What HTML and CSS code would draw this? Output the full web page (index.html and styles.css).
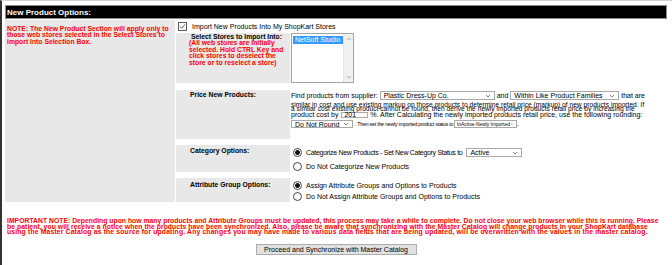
FILE: index.html
```html
<!DOCTYPE html>
<html>
<head>
<meta charset="utf-8">
<link rel="stylesheet" href="styles.css">
</head>
<body>
<div class="page">
  <div class="bar">New Product Options:</div>
  <div class="main">
    <div class="note">NOTE: The New Product Section will apply only to those web stores selected in the Select Stores to import Into Selection Box.</div>
    <div class="options">
      <div class="import-row">
        <span class="checkbox"><svg viewBox="0 0 9 9" width="7" height="7"><path d="M1.2 4.6 L3.4 6.8 L7.8 1.6" fill="none" stroke="#444" stroke-width="1.1"/></svg></span>
        <span>Import New Products Into My ShopKart Stores</span>
      </div>

      <div class="section stores">
        <div class="label">
          <div class="label-title">Select Stores to Import Into:</div>
          <div class="label-red">(All web stores are initially selected. Hold CTRL Key and click stores to deselect the store or to reselect a store)</div>
        </div>
        <div class="content">
          <div class="listbox">
            <div class="list-items"><div class="list-item selected">NetSoft Studio</div></div>
            <div class="scrollbar">
              <svg viewBox="0 0 6 4" width="6" height="4"><path d="M1 3 L3 1 L5 3" fill="none" stroke="#9a9a9a" stroke-width="0.8"/></svg>
              <svg viewBox="0 0 6 4" width="6" height="4"><path d="M1 1 L3 3 L5 1" fill="none" stroke="#9a9a9a" stroke-width="0.8"/></svg>
            </div>
          </div>
        </div>
      </div>

      <div class="section price">
        <div class="label"><div class="label-title">Price New Products:</div></div>
        <div class="content price-content">
          <div class="line line-sel">Find products from supplier: <span class="select w-supplier"><span>Plastic Dress-Up Co.</span><svg viewBox="0 0 6 4" width="6" height="4"><path d="M1 1 L3 3 L5 1" fill="none" stroke="#666" stroke-width="0.8"/></svg></span> and <span class="select w-family"><span>Within Like Product Families</span><svg viewBox="0 0 6 4" width="6" height="4"><path d="M1 1 L3 3 L5 1" fill="none" stroke="#666" stroke-width="0.8"/></svg></span> that are</div>
          <div class="line line-text first">similar in cost and use existing markup on those products to determine retail price (markup) of new products imported. If</div>
          <div class="line line-text">a similar cost existing product cannot be found, then derive the newly imported products retail price by increasing the</div>
          <div class="line line-input">product cost by <span class="input">201</span> %. After Calculating the newly imported products retail price, use the following rounding:</div>
          <div class="line line-sel last"><span class="select w-round"><span>Do Not Round</span><svg viewBox="0 0 6 4" width="6" height="4"><path d="M1 1 L3 3 L5 1" fill="none" stroke="#666" stroke-width="0.8"/></svg></span> <span class="tight">. Then set the newly imported product status to</span> <span class="select w-status"><span>InActive-Newly Imported</span><svg viewBox="0 0 6 4" width="6" height="4"><path d="M1 1 L3 3 L5 1" fill="none" stroke="#666" stroke-width="0.8"/></svg></span>.</div>
        </div>
      </div>

      <div class="section category">
        <div class="label"><div class="label-title">Category Options:</div></div>
        <div class="content radio-content">
          <div class="radio-row"><span class="radio on"></span><span class="cat-text">Categorize New Products - Set New Category Status to</span><span class="select w-active"><span>Active</span><svg viewBox="0 0 6 4" width="6" height="4"><path d="M1 1 L3 3 L5 1" fill="none" stroke="#666" stroke-width="0.8"/></svg></span></div>
          <div class="radio-row"><span class="radio"></span><span>Do Not Categorize New Products</span></div>
        </div>
      </div>

      <div class="section attribute">
        <div class="label"><div class="label-title">Attribute Group Options:</div></div>
        <div class="content radio-content">
          <div class="radio-row"><span class="radio on"></span><span>Assign Attribute Groups and Options to Products</span></div>
          <div class="radio-row"><span class="radio"></span><span>Do Not Assign Attribute Groups and Options to Products</span></div>
        </div>
      </div>
    </div>
  </div>

  <p class="important"><span class="imp-1">IMPORTANT NOTE: Depending upon how many products and Attribute Groups must be updated, this process may take a while to complete. Do not close your web browser while this is running. Please</span><br><span class="imp-2">be patient, you will receive a notice when the products have been synchronized. Also, please be aware that synchronizing with the Master Catalog will change products in your ShopKart database</span><br><span class="imp-3">using the Master Catalog as the source for updating. Any changes you may have made to various data fields that are being updated, will be overwritten with the values in the master catalog.</span></p>

  <div class="actions"><button class="btn" type="button">Proceed and Synchronize with Master Catalog</button></div>
</div>
</body>
</html>
```

FILE: styles.css
```css
* { box-sizing: border-box; }
html, body { margin: 0; padding: 0; background: #fff; }
body {
  font-family: "Liberation Sans", Arial, sans-serif;
  font-size: 7px;
  color: #000;
}
.page {
  width: 672px;
  height: 265px;
  overflow: hidden;
  border-top: 1px solid #d6d6d6;
  border-left: 2px solid #333;
  padding: 4px 0 0 3px;
}
.bar {
  width: 662px;
  height: 14px;
  background: #000;
  border: 1px solid #8c8c8c;
  color: #fff;
  font-weight: bold;
  font-size: 8px;
  line-height: 11px;
  padding: 1px 0 0 1px;
}
.main {
  display: grid;
  grid-template-columns: 170px 491px;
  column-gap: 1px;
  margin-top: 1px;
}
.note {
  background: #e8e8e8;
  color: #f00;
  font-weight: bold;
  font-size: 6.8px;
  line-height: 6.4px;
  padding: 6px 2px 0 2px;
}
.options { display: flex; flex-direction: column; }
.import-row {
  height: 13px;
  display: flex;
  align-items: center;
  gap: 5px;
  padding-left: 2px;
}
.checkbox {
  width: 9px;
  height: 9px;
  border: 1px solid #5a5a5a;
  background: #fff;
  display: flex;
  align-items: center;
  justify-content: center;
}
.section {
  display: grid;
  grid-template-columns: 114px 376px;
  column-gap: 1px;
}
.stores { height: 50px; }
.price { height: 49px; margin-top: 7px; }
.category { height: 27px; margin-top: 6px; }
.attribute { height: 24px; margin-top: 6px; }
.label {
  background: #e8e8e8;
  padding-left: 14px;
  font-weight: bold;
  font-size: 6.8px;
}
.label-title { line-height: 7px; }
.stores .label { padding-left: 13px; }
.stores .label-title { padding-left: 2px; }
.label-red { color: #f00; line-height: 6.6px; }
.price .label { padding-top: 1px; }
.category .label { padding-top: 2px; }
.attribute .label { padding-top: 3px; }

.listbox {
  width: 63px;
  height: 50px;
  border: 1px solid #a3a3a3;
  background: #fff;
  display: flex;
}
.list-items { flex: 1; padding: 2px 0 0 1px; }
.list-item { height: 8px; line-height: 8px; padding-left: 2px; }
.list-item.selected { background: #3399ff; color: #fff; }
.scrollbar {
  width: 10px;
  background: #f0f0f0;
  border-left: 1px solid #e4e4e4;
  display: flex;
  flex-direction: column;
  justify-content: space-between;
  align-items: center;
  padding: 3px 0;
}

.line { white-space: nowrap; }
.line-sel { height: 9px; line-height: 9px; }
.price-content .line-sel:first-child { margin-top: 1px; }
.line-text { height: 4.6px; line-height: 4.6px; font-size: 6.6px; letter-spacing: 0.03px; }
.line-text.first { margin-top: 2.6px; }
.line-input { height: 6px; line-height: 6px; margin-top: 0.5px; }
.line-sel.last { margin-top: 2px; height: 8px; line-height: 8px; }
.tight {
  display: inline-block;
  width: 97px;
  vertical-align: top;
  font-size: 5.2px;
  letter-spacing: -0.2px;
  text-align: justify;
  text-align-last: justify;
}

.select {
  display: inline-flex;
  align-items: center;
  justify-content: space-between;
  height: 9px;
  vertical-align: top;
  border: 1px solid #a9a9a9;
  background: #fff;
  padding: 0 3px 0 3px;
  line-height: 7px;
}
.last .select { height: 8px; }
.w-supplier { width: 115px; }
.w-family { width: 109px; }
.w-round { width: 62px; }
.w-status { width: 63px; padding: 0 2px 0 2px; font-size: 4.9px; }
.w-active { width: 56px; }
.cat-text { letter-spacing: -0.3px; }
.input {
  display: inline-block;
  width: 27px;
  height: 6px;
  line-height: 4px;
  vertical-align: top;
  border: 1px solid #a9a9a9;
  padding-left: 2px;
  margin-left: 1px;
}

.radio-content { padding-left: 2px; }
.radio-row {
  display: flex;
  align-items: center;
  gap: 4px;
  height: 9px;
}
.radio {
  width: 9px;
  height: 9px;
  border: 1px solid #444;
  border-radius: 50%;
  background: #fff;
  flex: none;
}
.radio.on { background: radial-gradient(circle, #111 0 2.1px, #fff 2.6px); }
.category .radio-row:first-child { margin-top: 3px; }
.category .radio-row + .radio-row { margin-top: 4.5px; }
.attribute .radio-row:first-child { margin-top: 2.5px; }
.attribute .radio-row + .radio-row { margin-top: 2px; }

.important {
  margin: 16.4px 0 0 0;
  width: 662px;
  padding-left: 2px;
  white-space: nowrap;
  color: #f00;
  font-weight: bold;
  font-size: 6.8px;
  line-height: 5.2px;
}
.imp-1 { letter-spacing: 0.02px; }
.imp-2 { letter-spacing: 0.06px; }
.imp-3 { letter-spacing: 0.16px; }
.actions {
  width: 662px;
  display: flex;
  justify-content: center;
  margin-top: 10px;
}
.btn {
  width: 161px;
  height: 11px;
  padding: 0;
  font-family: "Liberation Sans", Arial, sans-serif;
  font-size: 7px;
  line-height: 9px;
  color: #000;
  background: #e1e1e1;
  border: 1px solid #adadad;
  border-radius: 0;
}
```
